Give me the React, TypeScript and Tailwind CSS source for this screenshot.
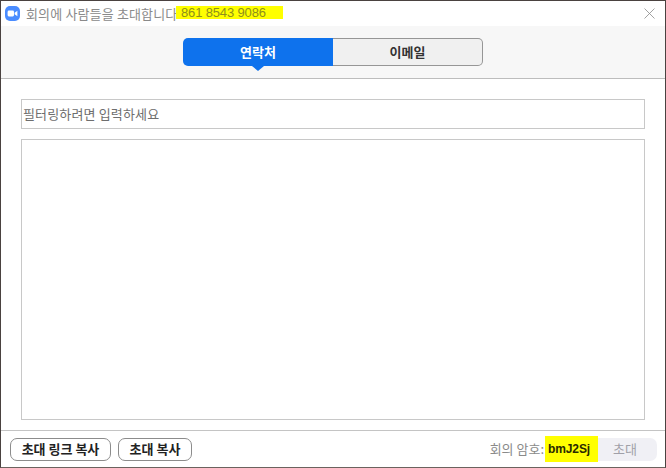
const font = { fontFamily: '"Noto Sans CJK KR", "Liberation Sans", sans-serif' };

const App = () => {
  return (
    <div
      className="w-[666px] h-[468px] bg-white border border-[#4a4240] border-b-[#6b625e] flex flex-col overflow-hidden text-[13px]"
      style={font}
    >
      <div className="h-[25px] flex items-center pl-[4px] pr-[10px] pb-[1px] shrink-0">
        <svg width="15" height="15" viewBox="0 0 15 15" className="shrink-0">
          <rect width="15" height="15" rx="5" fill="#4a8cff" />
          <rect x="2.6" y="4.6" width="6.4" height="5.8" rx="1.3" fill="#fff" />
          <path d="M9.6 6.7 L12.4 4.8 V10.2 L9.6 8.3 Z" fill="#fff" />
        </svg>
        <span className="ml-[6px] w-[150px] text-[#8a8a8a] tracking-[0.15px] leading-none whitespace-nowrap">회의에 사람들을 초대합니다</span>
        <span
          className="bg-[#ffff00] text-[#8f8f1a] text-[13px] h-[13px] w-[107px] pl-[5px] mb-[1px] flex items-center tracking-[-0.15px] leading-none"
          style={{ fontFamily: '"Liberation Sans", sans-serif' }}
        >
          861 8543 9086
        </span>
        <svg width="11" height="11" viewBox="0 0 11 11" className="ml-auto">
          <path d="M0.5 0.5 L10.5 10.5 M10.5 0.5 L0.5 10.5" stroke="#8a8a8a" strokeWidth="0.8" fill="none" />
        </svg>
      </div>

      <div className="h-[53px] bg-[#f7f7f7] border-b border-[#bdbdbd] flex justify-center pt-[12px] shrink-0">
        <div className="flex h-[28px]">
          <div className="relative w-[150px] bg-[#0e72ed] rounded-l-[5px] flex items-center justify-center text-white font-bold">
            연락처
            <div className="absolute left-[69px] bottom-[-5px] w-0 h-0 border-x-[6px] border-x-transparent border-t-[5px] border-t-[#0e72ed]"></div>
          </div>
          <div className="w-[150px] bg-[#f0f0f0] border border-l-0 border-[#969696] rounded-r-[5px] flex items-center justify-center text-[#333] font-bold">
            이메일
          </div>
        </div>
      </div>

      <div className="flex-1 flex flex-col gap-[10px] px-[20px] pt-[20px] pb-[10px] min-h-0">
        <div className="h-[30px] border border-[#c8c8c8] flex items-center pl-[1px] text-[#6e6e6e] tracking-[0.15px] shrink-0">
          필터링하려면 입력하세요
        </div>
        <div className="flex-1 border border-[#c8c8c8]"></div>
      </div>

      <div className="h-[37px] border-t border-[#c4c4c4] flex items-center pl-[9px] pr-[8px] shrink-0">
        <button className="w-[101px] h-[23px] border border-[#8c8c8c] rounded-[7px] font-bold text-[#222] flex items-center justify-center">
          초대 링크 복사
        </button>
        <button className="ml-[7px] w-[74px] h-[23px] border border-[#8c8c8c] rounded-[7px] font-bold text-[#222] flex items-center justify-center">
          초대 복사
        </button>
        <span className="ml-auto text-[#8a8a8a]">회의 암호:</span>
        <span
          className="relative z-10 ml-[1px] bg-[#ffff00] w-[53px] h-[26px] pl-[3px] mb-[1px] flex items-center font-bold text-[12px] tracking-[-0.1px] text-[#2a2a00]"
          style={{ fontFamily: '"Liberation Sans", sans-serif' }}
        >
          bmJ2Sj
        </span>
        <button className="-ml-[5px] w-[64px] h-[23px] bg-[#f0f0f5] rounded-r-[7px] text-[#a0a0a8] flex items-center justify-center">
          초대
        </button>
      </div>
    </div>
  );
};

export default App;
